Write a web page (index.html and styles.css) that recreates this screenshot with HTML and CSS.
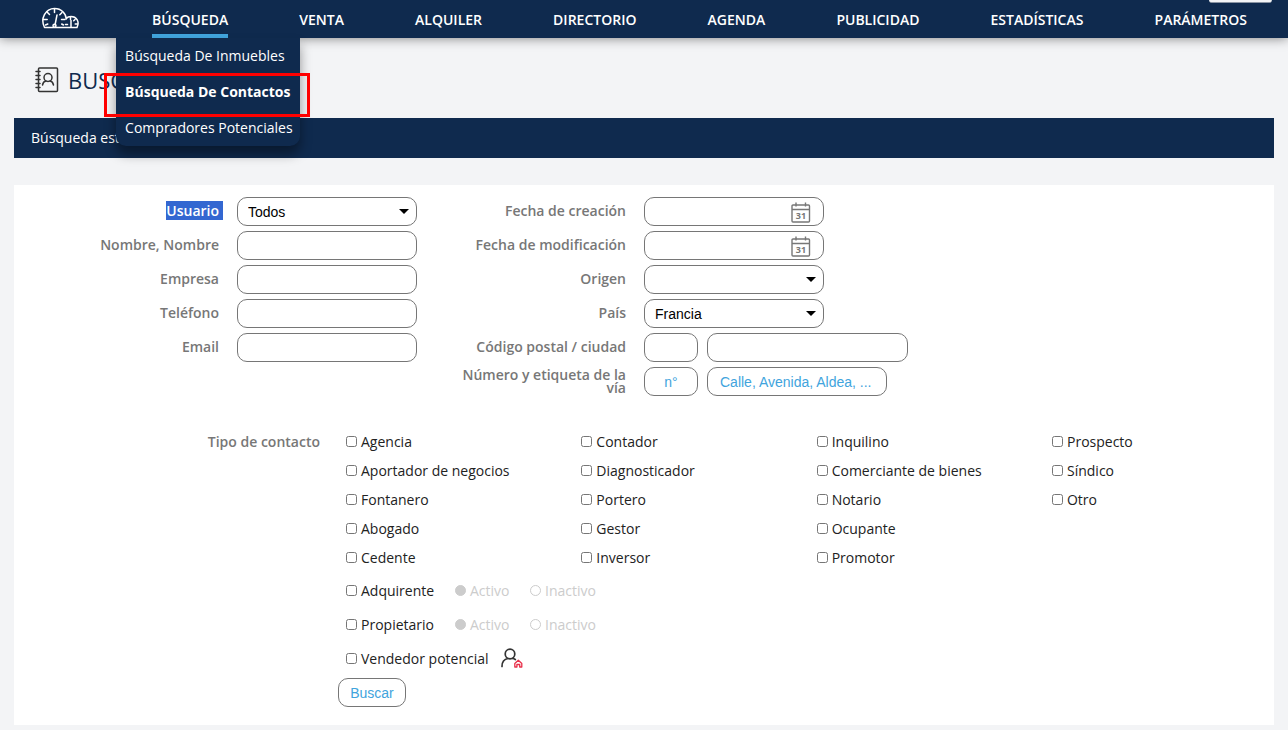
FILE: index.html
```html
<!DOCTYPE html>
<html lang="es">
<head>
  <meta charset="UTF-8" />
  <meta name="viewport" content="width=device-width, initial-scale=1.0"/>
  <title>Buscar contacto</title>
  <link rel="stylesheet" href="styles.css">
</head>
<body>

  <header class="top-bar">
    <nav class="main-nav">
      <a class="logo" href="#" aria-label="Panel">
        <svg width="37" height="23" viewBox="0 0 37 23" fill="none" stroke="#fff" stroke-width="1.5" stroke-linecap="round">
          <path d="M2.500 20.500C-2 11.500 3.500 1.500 12.500 1.500c7 0 11.500 5 11.800 10.500M2.500 20.500h32.500c3-6.500-.8-11-6-11-2.200 0-3.800.8-5 2.200"/>
          <path d="M12.500 2v3.500M5 5l2.500 2.500M20 5.500L17.800 7.800M1.200 12.500h4M19.500 12.500H23M3.500 18l2.300-1M15 8L13 18M21.500 18l-1.800-1M28.500 10v2.500M33 12.500l-1.300 1.300M35.500 17h-2.300M29 13.500V20M23.500 17.500h2"/>
          <circle cx="12.500" cy="18.800" r="1.500"/>
        </svg>
      </a>
      <div class="nav-item">
        <a class="nav-link active" href="#">BÚSQUEDA</a>
        <div class="submenu">
          <a href="#">Búsqueda De Inmuebles</a>
          <a class="current" href="#">Búsqueda De Contactos</a>
          <a href="#">Compradores Potenciales</a>
          <div class="marker"></div>
        </div>
      </div>
      <a class="nav-link" href="#">VENTA</a>
      <a class="nav-link" href="#">ALQUILER</a>
      <a class="nav-link" href="#">DIRECTORIO</a>
      <a class="nav-link" href="#">AGENDA</a>
      <a class="nav-link" href="#">PUBLICIDAD</a>
      <a class="nav-link" href="#">ESTADÍSTICAS</a>
      <a class="nav-link" href="#">PARÁMETROS</a>
    </nav>
    <div class="top-tab"></div>
  </header>

  <main>
    <div class="page-title">
      <svg width="24" height="26" viewBox="0 0 24 26" fill="none" stroke="#333" stroke-width="1.5" stroke-linecap="round">
        <rect x="3.500" y="1" width="19" height="23.500" rx="1"/>
        <path d="M1 4.500h4M1 8.500h4M1 12.500h4M1 16.500h4M1 20.500h4"/>
        <circle cx="13" cy="10.500" r="4"/>
        <path d="M7.500 18c.5-2.500 2-3.800 3.500-4M15 14c1.500.2 3 1.500 3.500 4"/>
      </svg>
      <h1>BUSCAR CONTACTO</h1>
    </div>

    <h2 class="section-bar">Búsqueda estándar</h2>

    <form class="panel">
      <div class="fields">
        <div class="column">
          <div class="field">
            <label for="usuario"><span class="selected">Usuario</span></label>
            <div class="select-box">
              <select id="usuario"><option>Todos</option></select>
            </div>
          </div>
          <div class="field">
            <label for="nombre">Nombre, Nombre</label>
            <input type="text" id="nombre">
          </div>
          <div class="field">
            <label for="empresa">Empresa</label>
            <input type="text" id="empresa">
          </div>
          <div class="field">
            <label for="telefono">Teléfono</label>
            <input type="text" id="telefono">
          </div>
          <div class="field">
            <label for="email">Email</label>
            <input type="text" id="email">
          </div>
        </div>

        <div class="column wide">
          <div class="field">
            <label for="creacion">Fecha de creación</label>
            <div class="date-box">
              <input type="text" id="creacion">
              <svg width="20" height="21" viewBox="0 0 20 21" fill="none" stroke="#777" stroke-width="1.4">
                <rect x="1" y="3" width="17.500" height="17" rx="1"/>
                <path d="M1 7.500h17.500M5 .5v4M14.500 .5v4"/>
                <text x="10" y="17" class="day">31</text>
              </svg>
            </div>
          </div>
          <div class="field">
            <label for="modificacion">Fecha de modificación</label>
            <div class="date-box">
              <input type="text" id="modificacion">
              <svg width="20" height="21" viewBox="0 0 20 21" fill="none" stroke="#777" stroke-width="1.4">
                <rect x="1" y="3" width="17.500" height="17" rx="1"/>
                <path d="M1 7.500h17.500M5 .5v4M14.500 .5v4"/>
                <text x="10" y="17" class="day">31</text>
              </svg>
            </div>
          </div>
          <div class="field">
            <label for="origen">Origen</label>
            <div class="select-box">
              <select id="origen"><option></option></select>
            </div>
          </div>
          <div class="field">
            <label for="pais">País</label>
            <div class="select-box">
              <select id="pais"><option>Francia</option></select>
            </div>
          </div>
          <div class="field">
            <label for="cp">Código postal / ciudad</label>
            <div class="pair">
              <input type="text" id="cp" class="short">
              <input type="text" class="city" aria-label="Ciudad">
            </div>
          </div>
          <div class="field">
            <label for="numero">Número y etiqueta de la vía</label>
            <div class="pair">
              <input type="text" id="numero" class="short" placeholder="n°">
              <input type="text" placeholder="Calle, Avenida, Aldea, ..." aria-label="Calle">
            </div>
          </div>
        </div>
      </div>

      <div class="contact-type">
        <div class="type-label">Tipo de contacto</div>
        <div class="type-content">
          <div class="type-list">
            <label><input type="checkbox">Agencia</label>
            <label><input type="checkbox">Contador</label>
            <label><input type="checkbox">Inquilino</label>
            <label><input type="checkbox">Prospecto</label>
            <label><input type="checkbox">Aportador de negocios</label>
            <label><input type="checkbox">Diagnosticador</label>
            <label><input type="checkbox">Comerciante de bienes</label>
            <label><input type="checkbox">Síndico</label>
            <label><input type="checkbox">Fontanero</label>
            <label><input type="checkbox">Portero</label>
            <label><input type="checkbox">Notario</label>
            <label><input type="checkbox">Otro</label>
            <label><input type="checkbox">Abogado</label>
            <label><input type="checkbox">Gestor</label>
            <label class="wide-cell"><input type="checkbox">Ocupante</label>
            <label><input type="checkbox">Cedente</label>
            <label><input type="checkbox">Inversor</label>
            <label><input type="checkbox">Promotor</label>
          </div>
          <div class="type-row">
            <label class="main"><input type="checkbox">Adquirente</label>
            <label class="off"><input type="radio" name="adquirente" checked disabled>Activo</label>
            <label class="off"><input type="radio" name="adquirente" disabled>Inactivo</label>
          </div>
          <div class="type-row">
            <label class="main"><input type="checkbox">Propietario</label>
            <label class="off"><input type="radio" name="propietario" checked disabled>Activo</label>
            <label class="off"><input type="radio" name="propietario" disabled>Inactivo</label>
          </div>
          <div class="type-row">
            <label><input type="checkbox">Vendedor potencial</label>
            <svg class="seller" width="22" height="20" viewBox="0 0 22 20" fill="none" stroke="#333" stroke-width="1.7" stroke-linecap="round">
              <circle cx="9" cy="6" r="4.800"/>
              <path d="M1 18.500c0-4.500 2.500-7.500 6-8M11.500 10.500c1 .1 2 .5 2.800 1"/>
              <path stroke="#e8304a" stroke-width="1.3" stroke-linejoin="round" d="M13.800 15.500L17.300 12.300l3.500 3.200V19H18.700v-2.500h-2.800V19H13.800z"/>
            </svg>
          </div>
          <button type="submit" class="search">Buscar</button>
        </div>
      </div>
    </form>
  </main>

</body>
</html>
```

FILE: styles.css
```css
* {
  box-sizing: border-box;
}

body {
  margin: 0;
  background-color: #f3f4f6;
  font-family: 'Open Sans', sans-serif;
  font-size: 14px;
  color: #222;
}

a {
  color: inherit;
  text-decoration: none;
}

/* Top navigation */
.top-bar {
  position: relative;
  z-index: 10;
  height: 38px;
  background-color: #0f2a4e;
  color: #fff;
  box-shadow: 0 0 12px rgba(0, 0, 0, 0.5);
}

.main-nav {
  display: flex;
  justify-content: space-between;
  height: 38px;
  padding: 0 41px 0 42px;
}

.logo {
  margin-right: 2px;
  padding-top: 7px;
}

.nav-item {
  position: relative;
}

.nav-link {
  display: block;
  height: 38px;
  line-height: 40px;
  font-weight: 600;
}

.nav-link.active {
  border-bottom: 4px solid #41a4dd;
}

.top-tab {
  position: absolute;
  top: 0;
  right: 16px;
  width: 63px;
  height: 3px;
  background-color: #f3f4f6;
  border-bottom: 1px solid #8a94a3;
  border-radius: 0 0 6px 6px;
}

.submenu {
  position: absolute;
  top: 38px;
  left: -36px;
  width: 184px;
  background-color: #0f2a4e;
  border-radius: 0 0 10px 10px;
  box-shadow: 0 8px 12px rgba(0, 0, 0, 0.4);
}

.submenu a {
  display: block;
  padding-left: 9px;
  line-height: 36px;
  white-space: nowrap;
}

.submenu .current {
  font-weight: bold;
}

.marker {
  position: absolute;
  top: 35px;
  left: -12px;
  width: 206px;
  height: 44px;
  border: 3px solid #f00;
  pointer-events: none;
}

/* Page heading */
main {
  padding: 0 14px;
}

.page-title {
  display: flex;
  align-items: center;
  gap: 9px;
  height: 80px;
  padding: 4px 0 0 21px;
}

.page-title h1 {
  margin: 0;
  font-size: 22px;
  font-weight: 500;
  color: #0f2a4e;
}

.section-bar {
  margin: 0 0 27px;
  padding-left: 17px;
  background-color: #0f2a4e;
  color: #fff;
  font-size: 14px;
  font-weight: normal;
  line-height: 40px;
}

/* Search form */
.panel {
  padding: 12px 0 18px;
  background-color: #fff;
}

.fields {
  display: flex;
}

.column {
  display: flex;
  flex-direction: column;
  gap: 5px;
}

.field {
  display: grid;
  grid-template-columns: 205px 180px;
  column-gap: 18px;
  align-items: center;
  height: 29px;
}

.wide .field {
  grid-template-columns: 209px auto;
}

.field label {
  padding: 0 0 2px 40px;
  text-align: right;
  font-weight: 600;
  line-height: 13px;
  color: #777;
}

.selected {
  display: inline-block;
  margin-right: -4px;
  padding-right: 4px;
  background-color: #3367d1;
  color: #fff;
  line-height: 19px;
}

input[type="text"],
select {
  display: block;
  width: 180px;
  height: 29px;
  padding: 0 12px;
  border: 1px solid #767676;
  border-radius: 10px;
  background-color: #fff;
  font-family: 'Liberation Sans', Arial, sans-serif;
  font-size: 14px;
  color: #000;
}

select {
  appearance: none;
  padding: 0 10px;
}

input::placeholder {
  color: #41a4dd;
}

.select-box,
.date-box {
  position: relative;
  width: 180px;
}

.select-box::after {
  content: '';
  position: absolute;
  top: 12px;
  right: 8px;
  border: 5px solid transparent;
  border-top-color: #000;
  border-bottom: 0;
  pointer-events: none;
}

.date-box svg {
  position: absolute;
  top: 5px;
  right: 13px;
}

.day {
  font-family: 'Open Sans', sans-serif;
  font-size: 9px;
  font-weight: bold;
  text-anchor: middle;
  fill: #777;
  stroke: none;
}

.pair {
  display: flex;
  gap: 9px;
}

.pair .short {
  width: 54px;
  text-align: center;
}

.pair .city {
  width: 201px;
}

/* Contact types */
.contact-type {
  display: grid;
  grid-template-columns: 306px 1fr;
  column-gap: 18px;
  margin-top: 31px;
}

.type-label {
  text-align: right;
  font-weight: 600;
  line-height: 29px;
  color: #777;
}

.type-list {
  display: grid;
  grid-template-columns: repeat(3, 1fr) 222px;
  margin-bottom: 1px;
  padding-left: 8px;
  line-height: 29px;
}

.type-list label,
.type-row label {
  display: flex;
  align-items: center;
  gap: 4px;
}

.type-list .wide-cell {
  grid-column: span 2;
}

.type-content input {
  width: 11px;
  height: 11px;
  margin: 0;
}

.type-row {
  display: flex;
  align-items: center;
  height: 34px;
  padding-left: 8px;
}

.type-row .main {
  width: 109px;
}

.type-row .off {
  width: 75px;
  color: #ccc;
}

.type-row input[type="radio"] {
  appearance: none;
  border: 1px solid #ccc;
  border-radius: 50%;
}

.type-row input[type="radio"]:checked {
  background-color: #ccc;
}

.seller {
  margin-left: 12px;
}

.search {
  display: block;
  width: 68px;
  height: 29px;
  margin-top: 3px;
  padding: 0;
  border: 1px solid #767676;
  border-radius: 10px;
  background-color: #fff;
  font-family: 'Liberation Sans', Arial, sans-serif;
  font-size: 14px;
  color: #41a4dd;
  cursor: pointer;
}
```
